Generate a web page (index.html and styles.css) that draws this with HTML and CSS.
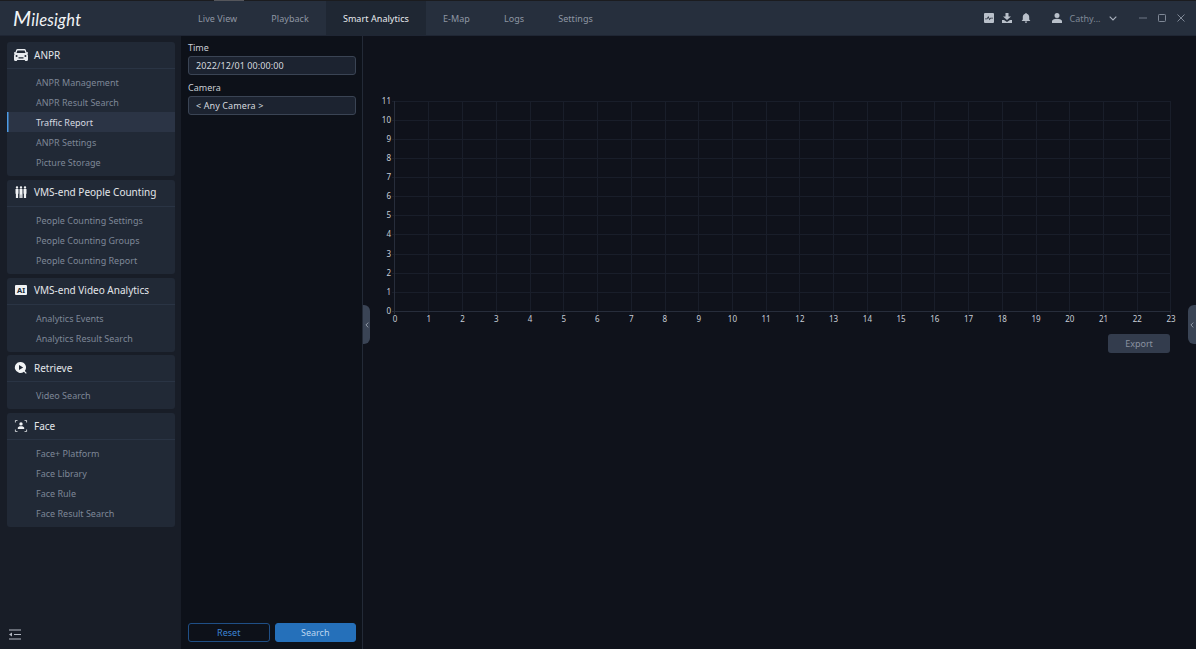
FILE: index.html
```html
<!DOCTYPE html>
<html lang="en">
<head>
<meta charset="utf-8">
<title>Smart Analytics</title>
<link rel="stylesheet" href="styles.css">
</head>
<body>
<div class="app">
  <header class="topbar">
    <span class="top-mark"></span>
    <div class="logo"><span class="logo-m">M</span>ilesight</div>
    <nav class="tabs">
      <a class="tab">Live View</a>
      <a class="tab">Playback</a>
      <a class="tab active">Smart Analytics</a>
      <a class="tab">E-Map</a>
      <a class="tab">Logs</a>
      <a class="tab">Settings</a>
    </nav>
    <div class="tools">
      <svg class="ic" viewBox="0 0 10 10"><path fill="#b9c0ca" fill-rule="evenodd" d="M1 0h8a1 1 0 0 1 1 1v8a1 1 0 0 1-1 1H1a1 1 0 0 1-1-1V1a1 1 0 0 1 1-1zM1 5.500v.8h2.200l1-1.600 1.300 2.600 1.200-1.800H9v-.8H6.300l-.7 1L4.300 3 2.800 5.500z"/></svg>
      <svg class="ic" viewBox="0 0 10 10"><path fill="#b9c0ca" d="M3.500 0h3v3.500H9L5 7 1 3.500h2.500zM0 7h2l3 2 3-2h2v3H0z"/></svg>
      <svg class="ic" viewBox="0 0 10 10"><path fill="#b9c0ca" d="M5 0c.5 0 .8.3.8.8C7.400 1.200 8.200 2.500 8.200 4v2.500L9.400 8H.6l1.200-1.500V4c0-1.500.8-2.800 2.400-3.200C4.200.3 4.500 0 5 0zM3.800 8.600h2.400C6.100 9.400 5.600 10 5 10s-1.100-.6-1.200-1.400z"/></svg>
      <svg class="ic user" viewBox="0 0 10 10"><path fill="#b9c0ca" d="M5 0a2.500 2.500 0 1 1 0 5 2.500 2.500 0 0 1 0-5zM0 10V8.300C0 6.800 2 5.800 5 5.800s5 1 5 2.500V10z"/></svg>
      <span class="username">Cathy...</span>
      <svg class="ic chev" viewBox="0 0 8 5"><path fill="none" stroke="#aab2be" stroke-width="1.100" d="M.7.7 4 4l3.300-3.300"/></svg>
      <svg class="ic win min" viewBox="0 0 8 8"><path stroke="#6f7887" d="M0 4h8"/></svg>
      <svg class="ic win" viewBox="0 0 8 8"><rect x=".5" y=".5" width="7" height="7" rx=".8" fill="none" stroke="#7f8896"/></svg>
      <svg class="ic win" viewBox="0 0 8 8"><path stroke="#7f8896" d="m.5.5 7 7m0-7-7 7"/></svg>
    </div>
  </header>
  <span class="pull pull-top"><svg viewBox="0 0 6 3" class="pull-ic"><path fill="none" stroke="#9aa2ae" stroke-width=".8" d="M.5 2.700 3 .6l2.500 2.100"/></svg></span>
  <div class="body">
    <aside class="sidebar">
      <section class="card">
        <h3 class="card-head">
          <svg class="sic" viewBox="0 0 14 12"><path fill="#e8ebef" fill-rule="evenodd" d="M3.500 0h7c.6 0 1 .3 1.200.8l.9 2.400h1.100c.2 0 .3.200.3.300v.9c0 .2-.1.300-.3.300h-.6c.5.500.9 1 .9 1.700v4.200c0 .8-.5 1.400-1 1.400h-1.500c-.4 0-.7-.4-.7-1H3.200c0 .6-.3 1-.7 1H1c-.5 0-1-.6-1-1.400V6.400c0-.7.400-1.200.9-1.700H.3C.100 4.700 0 4.600 0 4.400v-.9c0-.1.100-.3.300-.3h1.100l.9-2.400C2.500.3 2.900 0 3.500 0zM3.400 1.400l-.9 2.500h9l-.9-2.500zM2.600 6a1 1 0 1 0 0 2 1 1 0 0 0 0-2zm8.800 0a1 1 0 1 0 0 2 1 1 0 0 0 0-2zM4.500 8.200v1.200h5V8.200z"/></svg>
          ANPR
        </h3>
        <ul class="items">
          <li>ANPR Management</li>
          <li>ANPR Result Search</li>
          <li class="current">Traffic Report</li>
          <li>ANPR Settings</li>
          <li>Picture Storage</li>
        </ul>
      </section>
      <section class="card">
        <h3 class="card-head">
          <svg class="sic" viewBox="0 0 12 12"><path fill="#f1f3f5" d="M2 .2a1.200 1.200 0 1 1 0 2.400A1.200 1.200 0 0 1 2 .2zm4 0a1.200 1.200 0 1 1 0 2.400A1.200 1.200 0 0 1 6 .2zm4 0a1.200 1.200 0 1 1 0 2.400A1.200 1.200 0 0 1 10 .2zM.5 3h3v4.700l-.4.100V12H.9V7.800L.5 7.700zm4 0h3v9H6.200V8.400h-.4V12H4.500zm4 0h3v4.700l-.4.100V12H8.900V7.800l-.4-.1z"/></svg>
          VMS-end People Counting
        </h3>
        <ul class="items">
          <li>People Counting Settings</li>
          <li>People Counting Groups</li>
          <li>People Counting Report</li>
        </ul>
      </section>
      <section class="card">
        <h3 class="card-head">
          <span class="ai-badge">AI</span>
          VMS-end Video Analytics
        </h3>
        <ul class="items">
          <li>Analytics Events</li>
          <li>Analytics Result Search</li>
        </ul>
      </section>
      <section class="card">
        <h3 class="card-head">
          <svg class="sic" viewBox="0 0 12 12"><path fill="#f1f3f5" fill-rule="evenodd" d="M5.500 0a5.500 5.500 0 0 1 4.300 8.900l1.900 2-.8.800-2-2A5.500 5.500 0 1 1 5.500 0zM4 3v5l4.200-2.500z"/></svg>
          Retrieve
        </h3>
        <ul class="items">
          <li>Video Search</li>
        </ul>
      </section>
      <section class="card">
        <h3 class="card-head">
          <svg class="sic" viewBox="0 0 12 12"><path fill="#eef0f3" d="M6 2.200a1.700 1.700 0 1 1 0 3.400 1.700 1.700 0 0 1 0-3.400zM2.800 9V7.800c0-1 1.400-1.600 3.200-1.600s3.200.6 3.200 1.600V9z"/><path fill="none" stroke="#eef0f3" stroke-width=".8" d="M.4 2.500V.4h2.100m7 0h2.100v2.100m0 7v2.100H9.500m-7 0H.4V9.500"/></svg>
          Face
        </h3>
        <ul class="items">
          <li>Face+ Platform</li>
          <li>Face Library</li>
          <li>Face Rule</li>
          <li>Face Result Search</li>
        </ul>
      </section>
      <svg class="collapse" viewBox="0 0 12 11"><path fill="none" stroke="#b4bac4" stroke-width="1" d="M0 1h12M5 5.500h7M0 10h12"/><path fill="#b4bac4" d="M0 5.500 3 3.500v4z"/></svg>
    </aside>
    <section class="filters">
      <label class="field-label">Time</label>
      <div class="input">2022/12/01 00:00:00</div>
      <label class="field-label second">Camera</label>
      <div class="input">&lt; Any Camera &gt;</div>
      <div class="actions">
        <button class="btn ghost">Reset</button>
        <button class="btn primary">Search</button>
      </div>
    </section>
    <main class="main">
      <span class="pull pull-left"><svg viewBox="0 0 4 6" class="pull-ic-v"><path fill="none" stroke="#9aa2ae" stroke-width=".9" d="M3.300.6.900 3l2.400 2.400"/></svg></span>
      <span class="pull pull-right"><svg viewBox="0 0 4 6" class="pull-ic-v"><path fill="none" stroke="#9aa2ae" stroke-width=".9" d="M3.300.6.900 3l2.400 2.400"/></svg></span>
      <svg class="chart" viewBox="375 90 805 235" width="805" height="235">
        <path class="grid" d="M392 101.500h779M392 120.500h779M392 139.500h779M392 158.500h779M392 177.500h779M392 196.500h779M392 215.500h779M392 234.500h779M392 254.500h779M392 273.500h779M392 292.500h779"/>
        <path class="grid" d="M428.500 101v213M462.500 101v213M496.500 101v213M530.500 101v213M563.500 101v213M597.500 101v213M631.500 101v213M665.500 101v213M698.500 101v213M732.500 101v213M766.500 101v213M799.500 101v213M833.500 101v213M867.500 101v213M901.500 101v213M934.500 101v213M968.500 101v213M1002.500 101v213M1036.500 101v213M1069.500 101v213M1103.500 101v213M1137.500 101v213M1170.500 101v213"/>
        <path class="axis" d="M392 311.500h779M394.500 101v213"/>
        <g class="ylab">
          <text x="391" y="104">11</text><text x="391" y="123">10</text><text x="391" y="142">9</text><text x="391" y="161">8</text><text x="391" y="180">7</text><text x="391" y="199">6</text><text x="391" y="218">5</text><text x="391" y="237">4</text><text x="391" y="257">3</text><text x="391" y="276">2</text><text x="391" y="295">1</text><text x="391" y="314">0</text>
        </g>
        <g class="xlab">
          <text x="395" y="322">0</text><text x="428.700" y="322">1</text><text x="462.500" y="322">2</text><text x="496.200" y="322">3</text><text x="530" y="322">4</text><text x="563.700" y="322">5</text><text x="597.400" y="322">6</text><text x="631.200" y="322">7</text><text x="664.900" y="322">8</text><text x="698.700" y="322">9</text><text x="732.400" y="322">10</text><text x="766.100" y="322">11</text><text x="799.900" y="322">12</text><text x="833.600" y="322">13</text><text x="867.400" y="322">14</text><text x="901.100" y="322">15</text><text x="934.800" y="322">16</text><text x="968.600" y="322">17</text><text x="1002.300" y="322">18</text><text x="1036.100" y="322">19</text><text x="1069.800" y="322">20</text><text x="1103.500" y="322">21</text><text x="1137.300" y="322">22</text><text x="1171" y="322">23</text>
        </g>
      </svg>
      <button class="btn export">Export</button>
    </main>
  </div>
</div>
</body>
</html>
```
FILE: styles.css
```css
* { box-sizing: border-box; }
html, body { margin: 0; height: 100%; overflow: hidden; }
body { background: #0f121b; color: #d5d9df; font-family: "Noto Sans", sans-serif; font-size: 9px; }
.app { position: relative; display: flex; flex-direction: column; height: 649px; width: 1196px; }

.topbar { position: relative; display: flex; align-items: stretch; height: 36px; flex: none; background: #262f3d; border-top: 1px solid #1b1c1f; border-bottom: 1px solid #1f2634; }
.top-mark { position: absolute; left: 214px; top: -1px; width: 30px; height: 1px; background: #55565b; }
.logo { width: 181px; padding-left: 13px; line-height: 33px; font-family: "Lato", sans-serif; font-style: italic; font-size: 16.500px; letter-spacing: .2px; color: #f2f4f6; }
.logo-m { font-size: 21px; }
.tabs { display: flex; }
.tab { display: flex; align-items: center; padding: 0 17px; color: #8e96a3; letter-spacing: .06px; }
.tab.active { background: #1f2733; color: #e8eaee; }
.tools { margin-left: auto; display: flex; align-items: center; padding-right: 11.500px; }
.ic { width: 10px; height: 10px; margin-left: 8.500px; display: block; }
.user { margin-left: 21.500px; }
.username { margin-left: 7.500px; width: 36px; color: #7e8796; }
.chev { width: 8px; height: 5px; margin-left: 3px; }
.win { width: 8px; height: 8px; margin-left: 11px; }
.min { margin-left: 22px; }

.pull { position: absolute; background: #3a4455; display: flex; align-items: center; justify-content: center; }
.pull-top { left: 578px; top: 36px; width: 40px; height: 6px; border-radius: 0 0 6px 6px; }
.pull-ic { width: 6px; height: 3px; display: block; }
.pull-ic-v { width: 4px; height: 6px; display: block; }
.pull-left { left: 0; top: 269px; width: 7px; height: 39px; border-radius: 0 6px 6px 0; }
.pull-right { right: 0; top: 269px; width: 8px; height: 39px; border-radius: 6px 0 0 6px; }

.body { display: flex; flex: 1; min-height: 0; }
.sidebar { position: relative; width: 181px; flex: none; background: #181d27; padding: 6px 6px 0 7px; display: flex; flex-direction: column; gap: 3.800px; }
.card { background: #212936; border-radius: 3px; }
.card-head { display: flex; align-items: center; height: 27px; margin: 0; padding: 0 0 1px 7px; gap: 6px; border-bottom: 1px solid #2a3444; font-size: 10px; font-weight: 400; color: #e3e6ea; }
.sic { width: 14px; height: 12px; flex: none; }
.ai-badge { width: 12px; height: 10px; flex: none; margin: 0 1px; background: #f0f2f4; color: #232b38; font-size: 7.500px; font-weight: 700; line-height: 10px; text-align: center; border-radius: 1px; }
.items { list-style: none; margin: 0; padding: 3px 0 4px; }
.items li { height: 20px; line-height: 21px; padding-left: 29px; color: #7e8796; }
.items li.current { background: #2b3445; color: #d7dbe1; box-shadow: inset 1.500px 0 0 #4d9be6; }
.collapse { position: absolute; left: 9px; bottom: 9px; width: 12px; height: 11px; }

.filters { width: 182px; flex: none; display: flex; flex-direction: column; padding: 5px 6px 7px 7px; background: #0d1119; border-right: 1px solid #232a37; }
.field-label { line-height: 13px; color: #c9ced5; }
.field-label.second { margin-top: 6px; }
.input { height: 19px; margin-top: 2px; line-height: 17px; padding-left: 7px; letter-spacing: .1px; background: #1c2330; border: 1px solid #3a4454; border-radius: 3px; color: #d5d9df; }
.actions { margin-top: auto; display: flex; gap: 5px; }
.btn { height: 19px; padding: 0; font: inherit; border-radius: 3px; text-align: center; }
.actions .btn { flex: 1; }
.ghost { background: transparent; border: 1px solid #1f4f86; color: #3c83d4; }
.primary { background: #2570ba; border: 1px solid #2570ba; color: #bcd6f0; }

.main { position: relative; flex: 1; min-width: 0; display: flex; flex-direction: column; padding: 54px 26px 0 12px; background: #0f121b; }
.chart { display: block; flex: none; margin-right: -17px; overflow: visible; }
.grid { stroke: #191e2a; stroke-width: 1; fill: none; }
.axis { stroke: #272d3b; stroke-width: 1; fill: none; }
.ylab text, .xlab text { font-family: "Noto Sans", sans-serif; font-size: 8px; fill: #c8ced7; }
.ylab text { text-anchor: end; }
.xlab text { text-anchor: middle; }
.export { align-self: flex-end; width: 62px; margin-top: 9px; background: #333c4d; border: 0; color: #8a92a0; }
```
